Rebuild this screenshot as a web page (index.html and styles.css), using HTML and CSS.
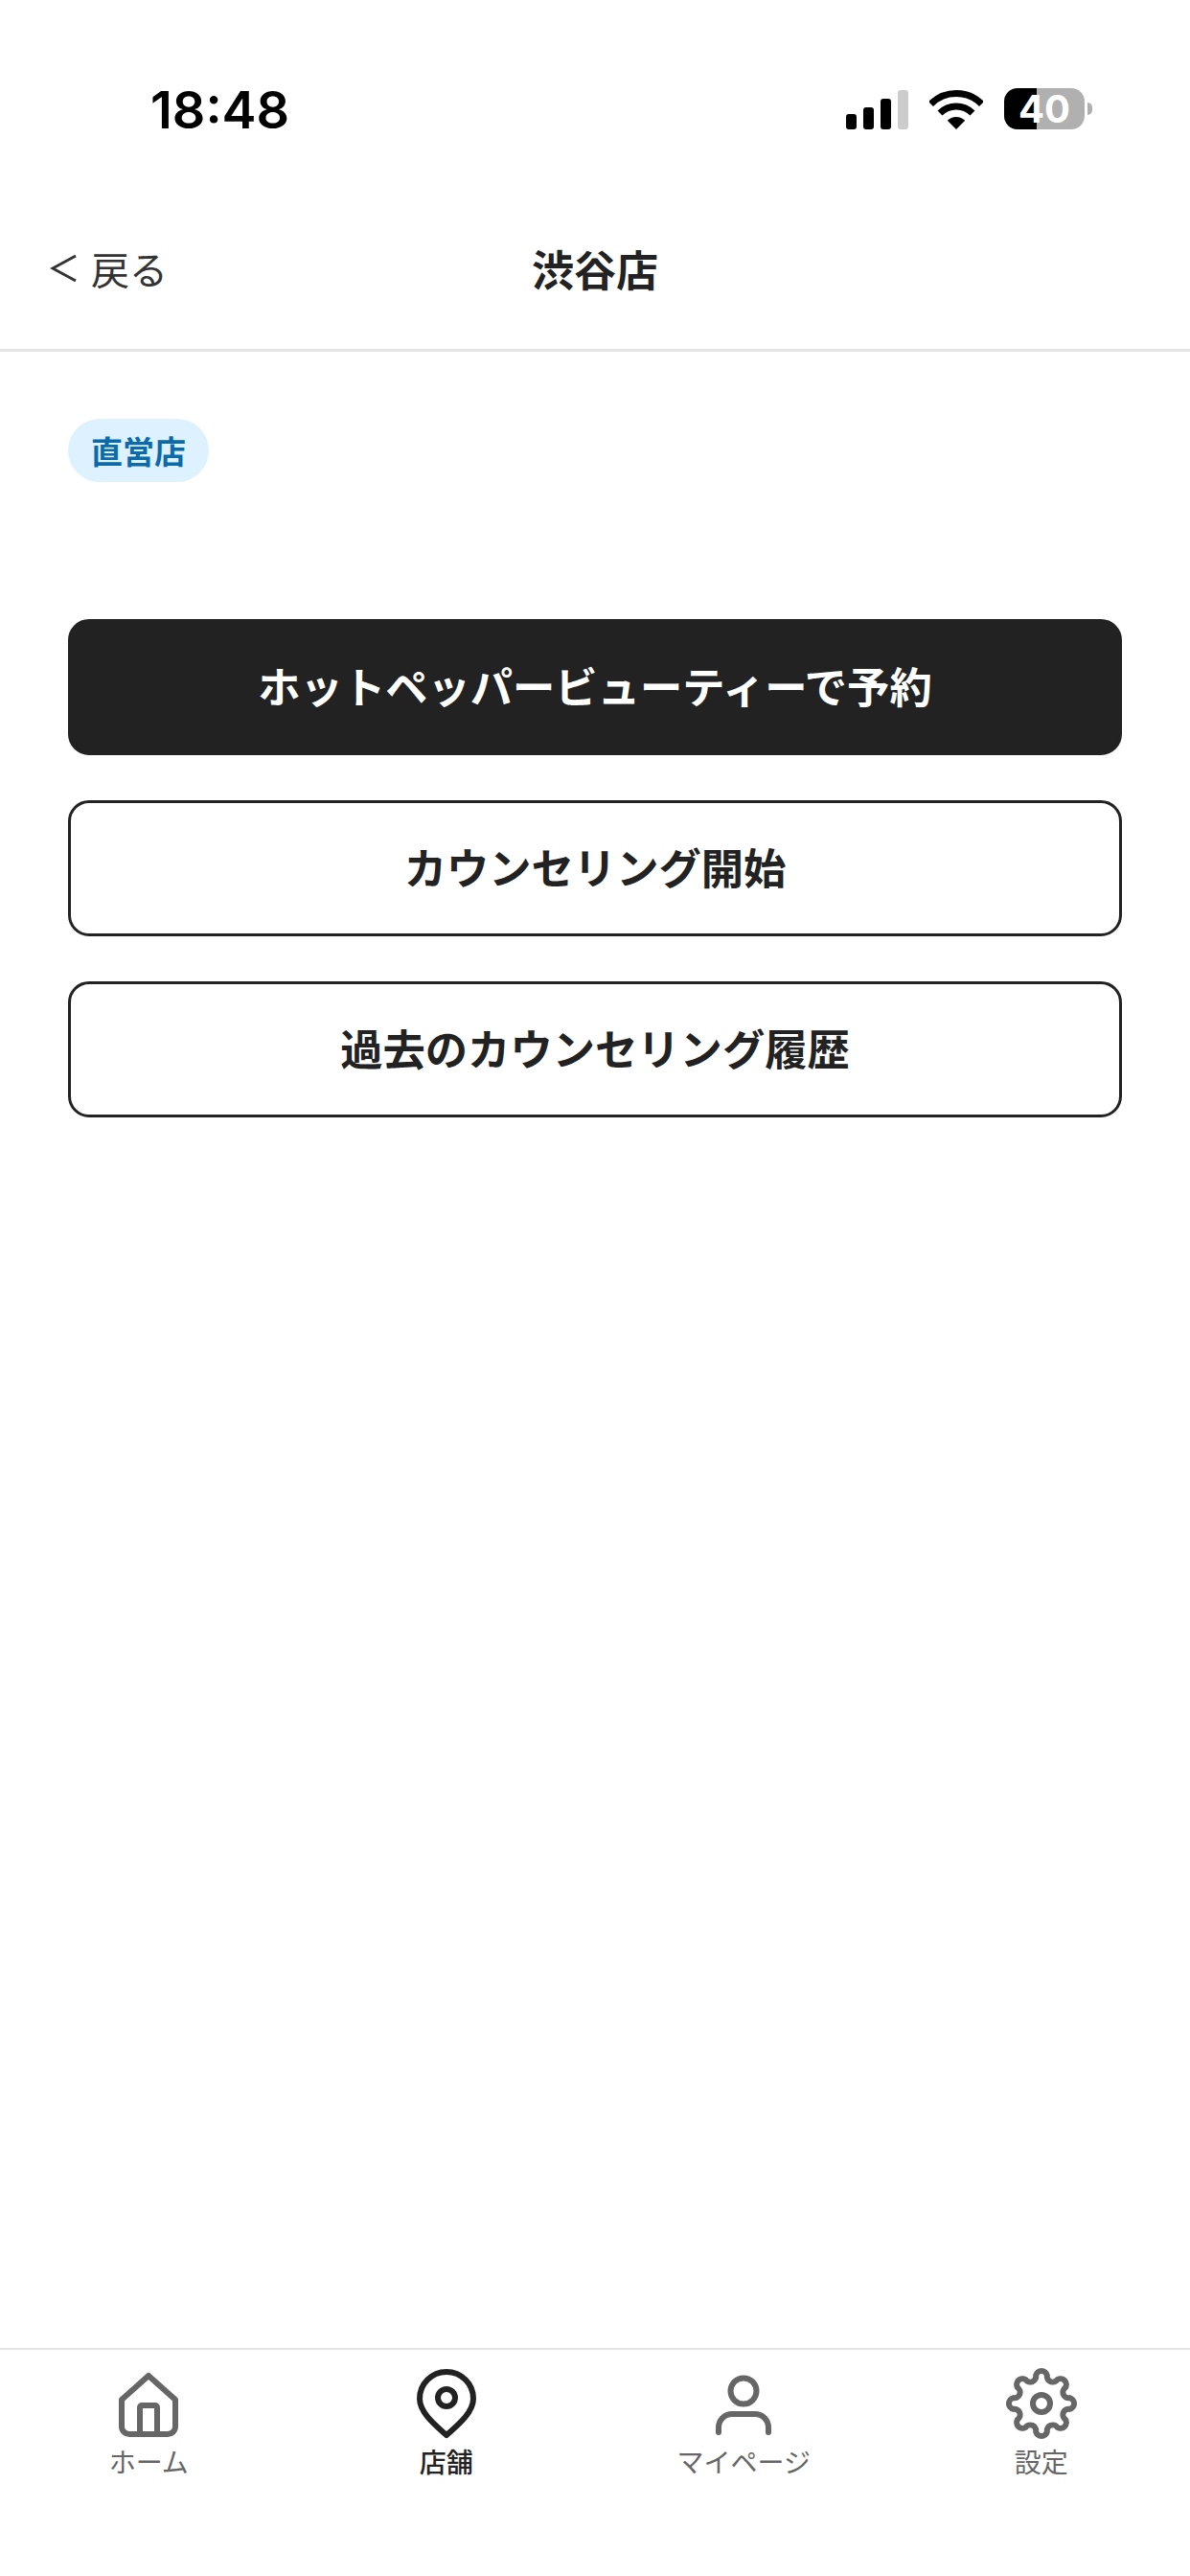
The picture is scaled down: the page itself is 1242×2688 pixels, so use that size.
FILE: index.html
```html
<!DOCTYPE html>
<html lang="ja">

<head>
    <meta charset="UTF-8">
    <meta name="viewport" content="width=device-width, initial-scale=1.0">
    <title>渋谷店</title>
    <link rel="stylesheet" href="styles.css">
</head>

<body>
    <div class="screen">
        <div class="statusbar">
            <span class="time">18:48</span>
            <div class="status-icons">
                <div class="signal">
                    <i class="bar bar1"></i>
                    <i class="bar bar2"></i>
                    <i class="bar bar3"></i>
                    <i class="bar bar4"></i>
                </div>
                <svg class="wifi" width="56" height="41" viewBox="0 0 56 41">
                    <path d="M1.5 14.5A37.5 37.5 0 0 1 54.500 14.5" fill="none" stroke="#000" stroke-width="7" />
                    <path d="M11 24A24 24 0 0 1 45 24" fill="none" stroke="#000" stroke-width="7" />
                    <path d="M28 41L18.800 31.800A13 13 0 0 1 37.200 31.800Z" fill="#000" />
                </svg>
                <div class="battery">40</div>
            </div>
        </div>

        <div class="navbar">
            <a class="back">
                <svg width="28" height="30" viewBox="0 0 28 30" fill="none" stroke="#333" stroke-width="3">
                    <path d="M27 2L3 15L27 28" />
                </svg>
                <span>戻る</span>
            </a>
            <h1 class="title">渋谷店</h1>
        </div>

        <div class="content">
            <span class="badge">直営店</span>
            <div class="actions">
                <button class="btn btn-dark">ホットペッパービューティーで予約</button>
                <button class="btn">カウンセリング開始</button>
                <button class="btn">過去のカウンセリング履歴</button>
            </div>
        </div>

        <div class="tabbar">
            <div class="tab">
                <svg width="80" height="80" viewBox="0 0 80 80" fill="none" stroke="currentColor" stroke-width="6" stroke-linejoin="round">
                    <path d="M40 11L12 36V64A8 8 0 0 0 20 72H60A8 8 0 0 0 68 64V36Z" />
                    <path d="M31 72V44A2 2 0 0 1 33 42H47A2 2 0 0 1 49 44V72" />
                </svg>
                <span>ホーム</span>
            </div>
            <div class="tab active">
                <svg width="80" height="80" viewBox="0 0 80 80" fill="none" stroke="currentColor" stroke-width="6" stroke-linejoin="round">
                    <path d="M40 73C30 64 12 50 12 35A28 28 0 0 1 68 35C68 50 50 64 40 73Z" />
                    <circle cx="40" cy="34" r="9" />
                </svg>
                <span>店舗</span>
            </div>
            <div class="tab">
                <svg width="80" height="80" viewBox="0 0 80 80" fill="none" stroke="currentColor" stroke-width="6" stroke-linecap="round">
                    <circle cx="40" cy="27" r="13.500" />
                    <path d="M14 70V65A14 14 0 0 1 28 51H52A14 14 0 0 1 66 65V70" />
                </svg>
                <span>マイページ</span>
            </div>
            <div class="tab">
                <svg width="80" height="80" viewBox="0 0 80 80" fill="none" stroke="currentColor" stroke-width="6">
                    <path d="M34.150 10.580A6 6 0 0 1 45.850 10.580A6 6 0 0 0 56.670 15.060A6 6 0 0 1 64.940 23.330A6 6 0 0 0 69.420 34.150A6 6 0 0 1 69.420 45.850A6 6 0 0 0 64.940 56.670A6 6 0 0 1 56.670 64.940A6 6 0 0 0 45.850 69.420A6 6 0 0 1 34.150 69.420A6 6 0 0 0 23.330 64.940A6 6 0 0 1 15.060 56.670A6 6 0 0 0 10.580 45.850A6 6 0 0 1 10.580 34.150A6 6 0 0 0 15.060 23.330A6 6 0 0 1 23.330 15.060A6 6 0 0 0 34.150 10.580Z" />
                    <circle cx="40" cy="40" r="9" />
                </svg>
                <span>設定</span>
            </div>
        </div>
    </div>
</body>

</html>
```

FILE: styles.css
```css
* {
    box-sizing: border-box;
}

body {
    margin: 0;
    background-color: #fff;
    font-family: "Noto Sans CJK JP", "Noto Sans", sans-serif;
    color: #222;
}

.screen {
    display: flex;
    flex-direction: column;
    width: 1242px;
    height: 2688px;
}

/* status bar */
.statusbar {
    display: flex;
    justify-content: space-between;
    align-items: center;
    height: 226px;
    padding: 0 102px 0 157px;
    flex-shrink: 0;
}

.time {
    margin-top: 3px;
    font-family: Inter, sans-serif;
    font-size: 54px;
    font-weight: 600;
    color: #000;
}

.status-icons {
    display: flex;
    align-items: flex-end;
    gap: 22px;
}

.signal {
    display: flex;
    align-items: flex-end;
    gap: 7px;
    height: 41px;
}

.bar {
    width: 11px;
    border-radius: 3px;
    background-color: #000;
}

.bar1 {
    height: 16px;
}

.bar2 {
    height: 23px;
}

.bar3 {
    height: 32px;
}

.bar4 {
    height: 41px;
    background-color: #ccc;
}

.battery {
    position: relative;
    width: 84px;
    height: 43px;
    margin-right: 8px;
    border-radius: 14px;
    background: linear-gradient(90deg, #000 40%, #b0b0b0 40%);
    font-family: Inter, sans-serif;
    font-size: 40px;
    font-weight: 700;
    line-height: 43px;
    text-align: center;
    color: #fff;
}

.battery::after {
    content: "";
    position: absolute;
    left: 87px;
    top: 15px;
    width: 5px;
    height: 13px;
    border-radius: 0 6px 6px 0;
    background-color: #b0b0b0;
}

/* nav */
.navbar {
    display: grid;
    grid-template-columns: 1fr auto 1fr;
    align-items: center;
    height: 143px;
    padding: 0 52px 28px;
    margin-top: -2px;
    border-bottom: 3px solid #e5e5e5;
    flex-shrink: 0;
}

.back {
    display: flex;
    align-items: center;
    gap: 15px;
    font-size: 40px;
    line-height: 54px;
    color: #333;
}

.title {
    margin: 0;
    font-size: 44px;
    font-weight: 700;
}

/* content */
.content {
    flex: 1;
    padding: 70px 71px 0;
}

.badge {
    display: inline-block;
    padding: 0 24px;
    height: 66px;
    border-radius: 33px;
    background-color: #ddf1ff;
    font-size: 33px;
    font-weight: 700;
    line-height: 66px;
    color: #0a6ba8;
}

.actions {
    display: flex;
    flex-direction: column;
    gap: 47px;
    margin-top: 143px;
}

.btn {
    height: 142px;
    padding-bottom: 6px;
    border: 3px solid #222;
    border-radius: 22px;
    background-color: #fff;
    font-family: inherit;
    font-size: 44.3px;
    font-weight: 700;
    color: #222;
}

.btn-dark {
    background-color: #222;
    color: #fff;
}

/* tabs */
.tabbar {
    display: grid;
    grid-template-columns: repeat(4, 1fr);
    height: 238px;
    padding-top: 16px;
    border-top: 2px solid #e5e5e5;
    flex-shrink: 0;
}

.tab {
    display: flex;
    flex-direction: column;
    align-items: center;
    font-size: 28px;
    line-height: 40px;
    color: #666;
}

.tab svg {
    display: block;
}

.active {
    color: #222;
}

.active span {
    font-weight: 500;
}
```
